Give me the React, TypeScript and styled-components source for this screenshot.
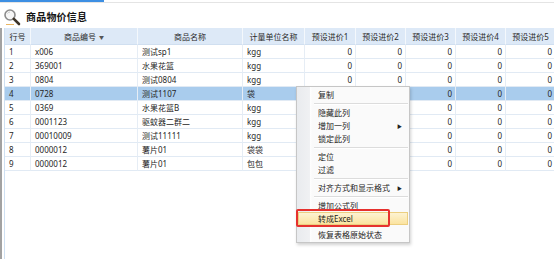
import styled, { createGlobalStyle } from "styled-components";

const GlobalStyle = createGlobalStyle`
    html, body {
        margin: 0;
        padding: 0;
        background: #ffffff;
    }
    * {
        box-sizing: border-box;
    }
`;

const columns = "26px 107px 105px 62px 51px 50px 50px 50px 50px";

const headers = ["行号", "商品编号", "商品名称", "计量单位名称", "预设进价1", "预设进价2", "预设进价3", "预设进价4", "预设进价5"];

const rows = [
    ["1", "x006", "测试sp1", "kgg"],
    ["2", "369001", "水果花篮", "kgg"],
    ["3", "0804", "测试0804", "kgg"],
    ["4", "0728", "测试1107", "袋"],
    ["5", "0369", "水果花篮B", "kgg"],
    ["6", "0001123", "驱蚊器二群二", "kgg"],
    ["7", "00010009", "测试11111", "kgg"],
    ["8", "0000012", "薯片01", "袋袋"],
    ["9", "0000012", "薯片01", "包包"],
];

type MenuEntry = { label?: string; sub?: boolean; active?: boolean; sep?: boolean; hidden?: boolean };

const menu: MenuEntry[] = [
    { label: "复制" },
    { sep: true },
    { label: "隐藏此列" },
    { label: "增加一列", sub: true },
    { label: "锁定此列" },
    { sep: true },
    { label: "定位" },
    { label: "过滤" },
    { sep: true },
    { label: "对齐方式和显示格式", sub: true },
    { sep: true },
    { label: "增加公式列" },
    { label: "转成Excel", active: true },
    { sep: true, hidden: true },
    { label: "恢复表格原始状态" },
];

export default function App() {
    return (
        <>
            <GlobalStyle/>
            <Page>
                <TopStrip><TabMark/></TopStrip>
                <TitleBar>
                    <svg width="18" height="18" viewBox="0 0 18 18">
                        <circle cx="7" cy="7" r="5" fill="#f6f6f6" stroke="#8c8c8c" strokeWidth="1.6"/>
                        <path d="M4.5 5.5 A3 3 0 0 1 7 4" fill="none" stroke="#c8c8c8" strokeWidth="1"/>
                        <line x1="10.8" y1="10.8" x2="16" y2="16" stroke="#3d3328" strokeWidth="2.6" strokeLinecap="round"/>
                        <line x1="3" y1="16.5" x2="11" y2="16.5" stroke="#e9b562" strokeWidth="1"/>
                    </svg>
                    <TitleText>商品物价信息</TitleText>
                </TitleBar>
                <Panel>
                    <Grid>
                        <Row $height={17} $header>
                            {headers.map((h, i) => (
                                <HeaderCell key={h}>
                                    {h}{i === 1 && <SortMark>▼</SortMark>}
                                </HeaderCell>
                            ))}
                        </Row>
                        {rows.map((r) => (
                            <Row key={r[0]} $height={14} $selected={r[0] === "4"}>
                                <Cell>{r[0]}</Cell>
                                <Cell>{r[1]}</Cell>
                                <Cell>{r[2]}</Cell>
                                <Cell>{r[3]}</Cell>
                                {[1, 2, 3, 4, 5].map((n) => (
                                    <Cell key={n} $right>0</Cell>
                                ))}
                            </Row>
                        ))}
                    </Grid>
                </Panel>

                <ContextMenu>
                    {menu.map((m, i) =>
                        m.sep ? (
                            <MenuSeparator key={i} $hidden={m.hidden}/>
                        ) : (
                            <MenuItem key={i} $active={m.active}>
                                {m.label}
                                {m.sub && <SubArrow>▶</SubArrow>}
                            </MenuItem>
                        )
                    )}
                </ContextMenu>
                <RedBox/>
            </Page>
        </>
    );
}

const Page = styled.div`
    position: relative;
    width: 554px;
    height: 259px;
    overflow: hidden;
    font-family: "Noto Sans", "Noto Sans CJK SC", sans-serif;
    color: #1e1e1e;
    display: flex;
    flex-direction: column;
`;

const TopStrip = styled.div`
    height: 3px;
    border-bottom: 1px solid #e4e4e4;
    flex-shrink: 0;
`;

const TabMark = styled.div`
    width: 104px;
    height: 2px;
    background: #3d8fe3;
`;

const TitleBar = styled.div`
    height: 25px;
    display: flex;
    align-items: center;
    gap: 5px;
    padding: 2px 0 0 3px;
    flex-shrink: 0;
`;

const TitleText = styled.span`
    font-family: "Noto Sans CJK SC", sans-serif;
    font-size: 10px;
    font-weight: 700;
    color: #141414;
    letter-spacing: 0.2px;
`;

const Panel = styled.div`
    flex: 1;
    border-left: 2px solid #a2a2a2;
    padding-left: 2px;
    display: flex;
`;

const Grid = styled.div`
    flex: 1;
    border-left: 1px solid #cfe0f2;
    display: flex;
    flex-direction: column;
`;

const Row = styled.div<{ $height: number; $header?: boolean; $selected?: boolean }>`
    display: grid;
    grid-template-columns: ${columns};
    height: ${(p) => p.$height}px;
    background: ${(p) => (p.$header ? "#dde9f7" : p.$selected ? "#a9cced" : "#ffffff")};
`;

const HeaderCell = styled.div`
    display: flex;
    align-items: center;
    justify-content: center;
    gap: 3px;
    font-size: 8px;
    color: #2a2a2a;
    white-space: nowrap;
    overflow: hidden;
    border-right: 1px solid #f4f8fc;
    border-bottom: 1px solid #d0dff0;
`;

const SortMark = styled.span`
    font-size: 5px;
    color: #555;
`;

const Cell = styled.div<{ $right?: boolean }>`
    display: flex;
    align-items: center;
    justify-content: ${(p) => (p.$right ? "flex-end" : "flex-start")};
    padding: 0 3px 0 4px;
    font-size: 8px;
    color: #262626;
    white-space: nowrap;
    overflow: hidden;
    border-right: 1px solid #e6edf5;
    border-bottom: 1px solid #e1eaf4;
`;

const ContextMenu = styled.div`
    position: absolute;
    left: 296px;
    top: 86px;
    width: 114px;
    padding: 1px 1px 1px 1px;
    background: linear-gradient(to right, #e9ebee 0, #f0f1f3 13px, #ffffff 13px, #fafafa 15px, #fafafa 100%);
    border: 1px solid #c6c6c6;
    box-shadow: 1px 2px 3px rgba(0, 0, 0, 0.18);
    display: flex;
    flex-direction: column;
`;

const MenuItem = styled.div<{ $active?: boolean }>`
    position: relative;
    height: 13px;
    display: flex;
    align-items: center;
    padding-left: 19px;
    font-size: 8px;
    color: #1c1c1c;
    white-space: nowrap;
    border: 1px solid ${(p) => (p.$active ? "#eccf80" : "transparent")};
    background: ${(p) => (p.$active ? "linear-gradient(#fdf3d2, #fbe3a0)" : "transparent")};
`;

const MenuSeparator = styled.div<{ $hidden?: boolean }>`
    height: ${(p) => (p.$hidden ? 3 : 5)}px;
    margin-left: 16px;
    display: flex;
    flex-direction: column;
    justify-content: center;

    &::before {
        content: '';
        height: 1px;
        background: ${(p) => (p.$hidden ? "transparent" : "#dcdcdc")};
    }
    &::after {
        content: '';
        height: 1px;
        background: ${(p) => (p.$hidden ? "transparent" : "#ffffff")};
    }
`;

const SubArrow = styled.span`
    position: absolute;
    right: 5px;
    font-size: 5px;
    color: #222;
`;

const RedBox = styled.div`
    position: absolute;
    left: 296px;
    top: 209px;
    width: 94px;
    height: 18px;
    border: 2px solid #e6312e;
    border-radius: 2px;
`;
